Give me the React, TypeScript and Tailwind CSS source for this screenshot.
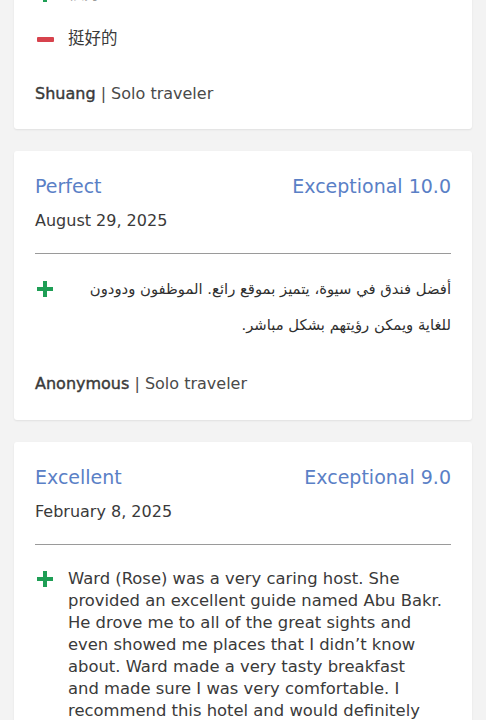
import React from "react";

const font = { fontFamily: '"DejaVu Sans", "Noto Sans CJK SC", sans-serif' };

function Plus() {
  return (
    <svg width="16" height="16" viewBox="0 0 16 16" className="shrink-0">
      <rect x="6" y="0" width="4" height="16" fill="#1e9e55" />
      <rect x="0" y="6" width="16" height="4" fill="#1e9e55" />
    </svg>
  );
}

function Minus() {
  return (
    <svg width="17" height="5" viewBox="0 0 17 5" className="shrink-0">
      <rect x="0" y="0" width="17" height="5" rx="1" fill="#d7434d" />
    </svg>
  );
}

function Card({ children, className = "" }: { children: React.ReactNode; className?: string }) {
  return (
    <div className={"mx-[14px] rounded-[3px] bg-white px-[21px] shadow-[0_1px_2px_rgba(0,0,0,0.08)] " + className}>
      {children}
    </div>
  );
}

function Header({ title, score, date }: { title: string; score: string; date: string }) {
  return (
    <>
      <div className="flex h-[24px] items-center justify-between text-[19px] leading-[24px] text-[#5a80c6]">
        <span>{title}</span>
        <span>{score}</span>
      </div>
      <div className="mt-[11px] h-[24px] text-[16px] leading-[24px] text-[#3a3a3a]">{date}</div>
      <div className="mt-[20px] h-px bg-[#9a9a9a]" />
    </>
  );
}

function Author({ name, type, className = "" }: { name: string; type: string; className?: string }) {
  return (
    <div className={"h-[24px] text-[16px] leading-[24px] text-[#3a3a3a] " + className}>
      <span className="[-webkit-text-stroke:0.4px_#3a3a3a]">{name}</span>
      <span className="text-[#4a4a4a]"> | {type}</span>
    </div>
  );
}

export default function App() {
  return (
    <div className="min-h-[720px] overflow-hidden bg-[#f3f3f3]" style={font}>
      <div className="flex flex-col gap-[22px]">
        <Card className="mt-[-50px] pt-[26px] pb-[23px]">
          <div className="flex h-[36px] items-center">
            <div className="flex w-[33px] justify-start pl-[2px]">
              <Plus />
            </div>
            <span className="text-[16.5px] text-[#9a9a9a]">很好</span>
          </div>
          <div className="mt-[9px] flex h-[36px] items-center">
            <div className="flex w-[33px] justify-start pl-[2px]">
              <Minus />
            </div>
            <span className="text-[16.5px] text-[#3a3a3a]">挺好的</span>
          </div>
          <Author name="Shuang" type="Solo traveler" className="mt-[25px]" />
        </Card>

        <Card className="pt-[23px] pb-[24px]">
          <Header title="Perfect" score="Exceptional 10.0" date="August 29, 2025" />
          <div className="mt-[17px] flex items-start">
            <div className="flex h-[36px] w-[33px] items-center pl-[2px]">
              <Plus />
            </div>
            <p dir="rtl" className="flex-1 text-right text-[14.8px] leading-[36px] text-[#2f2f2f]">
              أفضل فندق في سيوة، يتميز بموقع رائع. الموظفون ودودون
              <br />
              للغاية ويمكن رؤيتهم بشكل مباشر.
            </p>
          </div>
          <Author name="Anonymous" type="Solo traveler" className="mt-[29px]" />
        </Card>

        <Card className="pt-[23px] pb-[24px]">
          <Header title="Excellent" score="Exceptional 9.0" date="February 8, 2025" />
          <div className="mt-[23px] flex items-start">
            <div className="flex h-[22px] w-[33px] items-center pl-[2px]">
              <Plus />
            </div>
            <p className="flex-1 whitespace-nowrap text-[16.4px] leading-[22px] text-[#3a3a3a]">
              Ward (Rose) was a very caring host. She
              <br />
              provided an excellent guide named Abu Bakr.
              <br />
              He drove me to all of the great sights and
              <br />
              even showed me places that I didn’t know
              <br />
              about. Ward made a very tasty breakfast
              <br />
              and made sure I was very comfortable. I
              <br />
              recommend this hotel and would definitely
              <br />
              stay here again.
            </p>
          </div>
          <Author name="Ward" type="Solo traveler" className="mt-[29px]" />
        </Card>
      </div>
    </div>
  );
}
